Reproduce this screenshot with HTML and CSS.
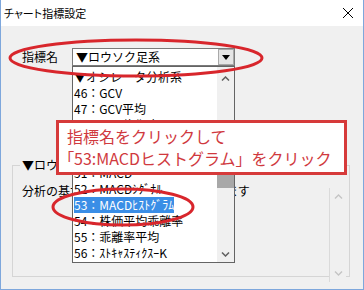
FILE: index.html
```html
<!DOCTYPE html>
<html lang="ja">
<head>
    <meta charset="UTF-8">
    <meta name="viewport" content="width=device-width, initial-scale=1.0">
    <title>チャート指標設定</title>
    <link rel="stylesheet" href="styles.css">
</head>
<body>
    <div class="window">
        <div class="titlebar">
            <span class="title">チャート指標設定</span>
            <svg class="close" width="12" height="12" viewBox="0 0 12 12">
                <path d="M1 1 L11 11 M11 1 L1 11" stroke="#000" stroke-width="1" fill="none"/>
            </svg>
        </div>
        <div class="content">
            <div class="field-row">
                <label class="field-label">指標名</label>
                <div class="combo">
                    <span class="combo-text">▼ロウソク足系</span>
                    <span class="combo-btn">
                        <svg width="8" height="5" viewBox="0 0 8 5"><path d="M0 0 H8 L4 5 Z" fill="#000"/></svg>
                    </span>
                </div>
            </div>
            <div class="group">
                <span class="group-title">▼ロウソク足系</span>
                <div class="group-body">
                    <p class="desc">分析の基本となるローソク足を表示します</p>
                    <div class="vscroll vscroll-off">
                        <svg width="9" height="5" viewBox="0 0 9 5"><path d="M1 4.5 L4.5 1 L8 4.5" stroke="#c4c4c4" stroke-width="1.4" fill="none"/></svg>
                        <svg width="9" height="5" viewBox="0 0 9 5"><path d="M1 0.5 L4.5 4 L8 0.5" stroke="#c4c4c4" stroke-width="1.4" fill="none"/></svg>
                    </div>
                </div>
            </div>
        </div>

        <!-- open dropdown of the combo -->
        <div class="dropdown">
            <ul class="items">
                <li>▼オシレータ分析系</li>
                <li>46：GCV</li>
                <li>47：GCV平均</li>
                <li>48：一目均衡表</li>
                <li>49：ﾎﾞﾘﾝｼﾞｬｰ</li>
                <li>50：RSI</li>
                <li>51：MACD</li>
                <li>52：MACDｼｸﾞﾅﾙ</li>
                <li><span class="selected">53：MACDﾋｽﾄｸﾞﾗﾑ</span></li>
                <li>54：株価平均乖離率</li>
                <li>55：乖離率平均</li>
                <li>56：ｽﾄｷｬｽﾃｨｸｽｰK</li>
            </ul>
            <div class="vscroll">
                <svg width="9" height="5" viewBox="0 0 9 5"><path d="M1 4.5 L4.5 1 L8 4.5" stroke="#606060" stroke-width="1.5" fill="none"/></svg>
                <div class="thumb"></div>
                <svg width="9" height="5" viewBox="0 0 9 5"><path d="M1 0.5 L4.5 4 L8 0.5" stroke="#606060" stroke-width="1.5" fill="none"/></svg>
            </div>
        </div>

        <!-- annotation -->
        <div class="callout">
            <p>指標名をクリックして</p>
            <p><span class="bracket">「</span>53:MACDヒストグラム」をクリック</p>
        </div>
        <svg class="marks" width="364" height="290" viewBox="0 0 364 290">
            <ellipse cx="136" cy="58" rx="126" ry="18" fill="none" stroke="#d8262c" stroke-width="3"/>
            <ellipse cx="123" cy="207" rx="70" ry="18" fill="none" stroke="#d8262c" stroke-width="3"/>
        </svg>
    </div>
</body>
</html>
```

FILE: styles.css
```css
body {
    margin: 0;
    font-family: "Noto Sans CJK JP", "Noto Sans", sans-serif;
    font-size: 12px;
    color: #000;
}
.window {
    position: relative;
    width: 364px;
    height: 290px;
    box-sizing: border-box;
    border: 1px solid #7ea7dc;
    border-top: none;
    background: #f0f0f0;
    overflow: hidden;
}
.titlebar {
    height: 26px;
    background: #fff;
    display: flex;
    align-items: center;
    justify-content: space-between;
    padding: 0 9px 0 3px;
}
.title {
    font-size: 11px;
    font-feature-settings: "palt";
    line-height: 14px;
}
.content {
    padding-top: 22px;
}
.field-row {
    display: flex;
    align-items: center;
    padding-left: 21px;
}
.field-label {
    width: 50px;
    line-height: 18px;
}
.combo {
    width: 163px;
    height: 18px;
    box-sizing: border-box;
    border: 1px solid #7a7a7a;
    background: #fff;
    display: flex;
    align-items: center;
    justify-content: space-between;
}
.combo-text {
    padding-left: 3px;
    line-height: 16px;
}
.combo-btn {
    width: 16px;
    height: 16px;
    box-sizing: border-box;
    background: #e5e5e5;
    border: 1px solid #a9a9a9;
    display: flex;
    align-items: center;
    justify-content: center;
}
.group {
    margin: 99px 13px 0 11px;
    height: 110px;
    border: 1px solid #d5d5d5;
}
.group-title {
    display: inline-block;
    margin: -8px 0 0 7px;
    padding: 0 2px;
    background: #f0f0f0;
    line-height: 14px;
    vertical-align: top;
}
.group-body {
    display: flex;
    align-items: flex-start;
    padding: 1px 3px 0 9px;
}
.desc {
    flex: 1;
    margin: 0;
    line-height: 14px;
}
.vscroll {
    width: 17px;
    display: flex;
    flex-direction: column;
    align-items: center;
    justify-content: space-between;
    padding: 6px 0;
    box-sizing: border-box;
    background: #f0f0f0;
}
.vscroll-off {
    height: 94px;
    margin-top: 4px;
    border-left: 1px solid #dadada;
}
.dropdown {
    position: absolute;
    left: 71px;
    top: 66px;
    width: 163px;
    height: 197px;
    box-sizing: border-box;
    border: 1px solid #646464;
    background: #fff;
    display: flex;
}
.items {
    flex: 1;
    list-style: none;
    margin: 0;
    padding: 2px 0 0 1px;
    overflow: hidden;
}
.items li {
    line-height: 16px;
    height: 16px;
    white-space: nowrap;
}
.selected {
    display: inline-block;
    background: #3a8ee6;
    color: #fff;
}
.dropdown .vscroll {
    position: relative;
    padding: 9px 0 5px;
}
.thumb {
    position: absolute;
    left: 0;
    top: 84px;
    width: 17px;
    height: 37px;
    background: #a8a8a8;
}
.callout {
    position: absolute;
    left: 55px;
    top: 120px;
    width: 291px;
    height: 55px;
    box-sizing: border-box;
    border: 3px solid #d63a3a;
    background: #fff;
    padding: 2px 0 0 8px;
    color: #d0393e;
    font-size: 16px;
}
.callout p {
    margin: 0;
    line-height: 22px;
    white-space: nowrap;
}
.bracket {
    font-feature-settings: "palt";
    margin-left: -1px;
}
.marks {
    position: absolute;
    left: -1px;
    top: 0;
    pointer-events: none;
}
```
